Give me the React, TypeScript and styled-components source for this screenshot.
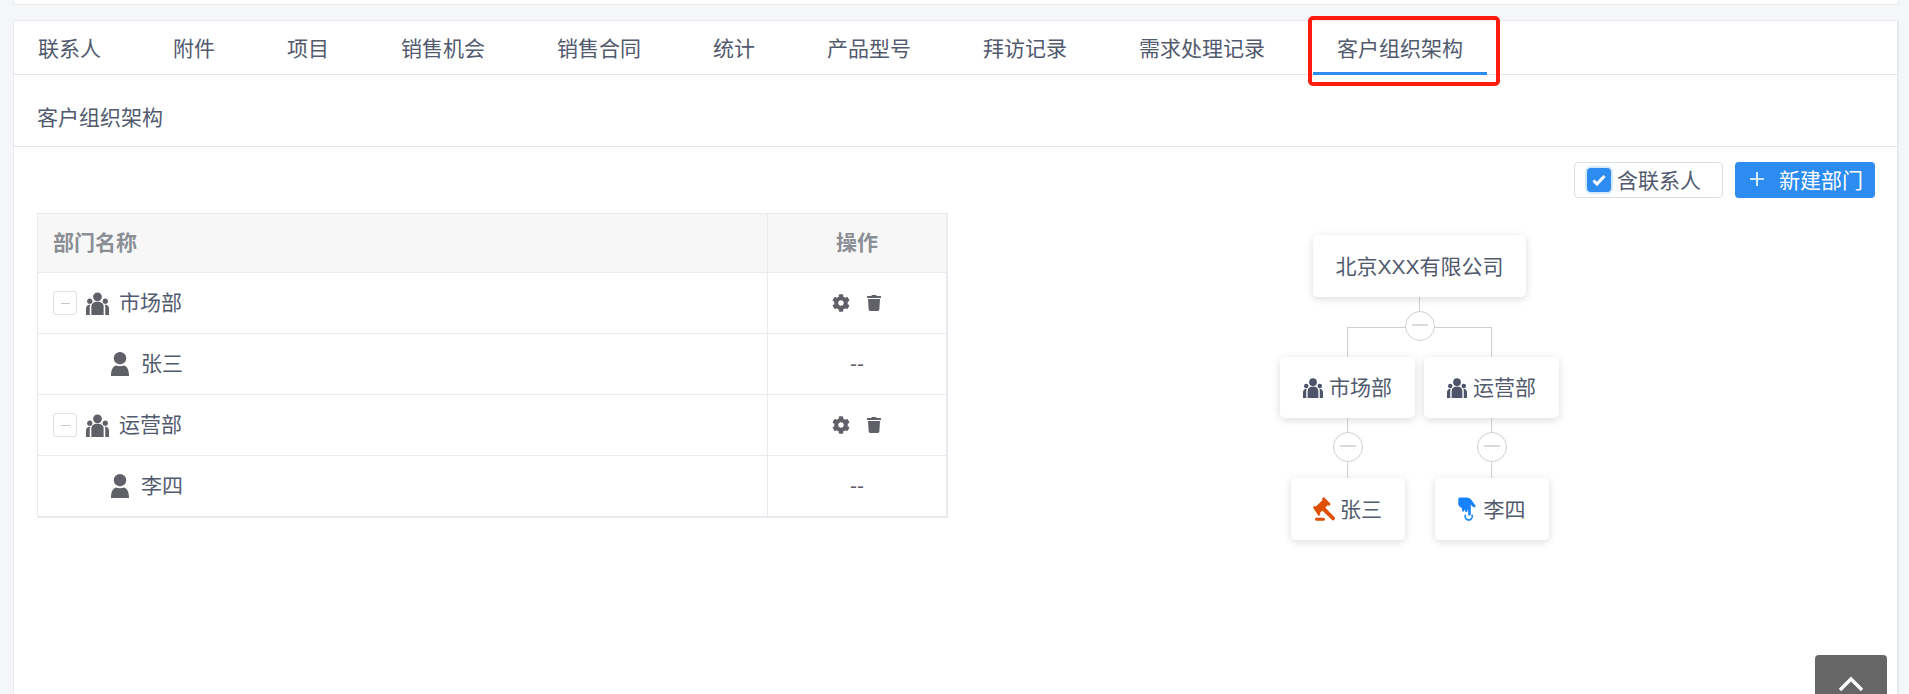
import React from 'react';
import styled, { createGlobalStyle } from 'styled-components';
import { FaCog, FaTrash } from 'react-icons/fa';

const FONT = `"Helvetica Neue", "Liberation Sans", "Noto Sans CJK SC", sans-serif`;
const TEXT = '#515a6e';
const LINE = '#e8eaf0';
const NODE_LINE = '#d0d0d0';
const BLUE = '#2d8cf0';

const Global = createGlobalStyle`
  html, body { margin: 0; padding: 0; height: 694px; overflow: hidden; background: #f5f6f8; }
  body { font-family: ${FONT}; color: ${TEXT}; font-size: 21px; }
  * { box-sizing: border-box; }
`;

const Page = styled.div`
  position: relative;
  height: 694px;
  padding: 0 10px 0 13px;
  overflow: hidden;
`;
const TopStub = styled.div`
  height: 5px;
  background: #fff;
  border: 1px solid ${LINE};
  border-top: 0;
`;
const Card = styled.section`
  margin-top: 15px;
  height: 680px;
  background: #fff;
  border: 1px solid ${LINE};
  border-right-width: 2px;
`;
const TabBar = styled.nav`
  display: flex;
  height: 54px;
  border-bottom: 1px solid #e2e4e9;
`;
const Tab = styled.div<{ $active?: boolean }>`
  position: relative;
  padding: 3px 24px 0;
  margin-right: 24px;
  height: 54px;
  line-height: 49px;
  white-space: nowrap;
  border-bottom: 3px solid ${p => (p.$active ? BLUE : 'transparent')};
`;
const RedBox = styled.div`
  position: absolute;
  left: -5px;
  top: -5px;
  width: 192px;
  height: 70px;
  border: 4px solid #fd1c10;
  border-radius: 5px;
  pointer-events: none;
`;
const SubHeader = styled.div`
  height: 72px;
  padding: 8px 23px 0;
  line-height: 70px;
  border-bottom: 1px solid #e2e4e9;
`;
const Content = styled.div`
  padding: 15px 22px 0 23px;
`;
const Toolbar = styled.div`
  display: flex;
  justify-content: flex-end;
  gap: 12px;
  height: 36px;
`;
const CheckWrap = styled.label`
  display: flex;
  align-items: center;
  width: 149px;
  height: 36px;
  padding-left: 12px;
  gap: 7px;
  border: 1px solid #dcdee2;
  border-radius: 4px;
  background: #fff;
`;
const CheckLabel = styled.span`
  margin-top: -3px;
  margin-left: -1px;
`;
const CheckBox = styled.span`
  display: flex;
  align-items: center;
  justify-content: center;
  width: 24px;
  height: 24px;
  border-radius: 4px;
  background: ${BLUE};
  box-shadow: 0 0 0 2px #d5e8fc;
`;
const PrimaryButton = styled.button`
  display: flex;
  align-items: center;
  width: 140px;
  height: 36px;
  padding: 0 0 3px 15px;
  gap: 15px;
  border: 0;
  border-radius: 4px;
  background: ${BLUE};
  color: #fff;
  font-family: ${FONT};
  font-size: 21px;
`;
const Columns = styled.div`
  display: flex;
  margin-top: 15px;
`;
const Table = styled.div`
  width: 911px;
  height: 305px;
  border: 1px solid ${LINE};
  border-right-width: 2px;
  border-bottom-width: 3px;
  flex: none;
`;
const Row = styled.div<{ $head?: boolean; $last?: boolean }>`
  display: grid;
  grid-template-columns: 730px 1fr;
  height: ${p => (p.$head ? 59 : p.$last ? 60 : 61)}px;
  background: ${p => (p.$head ? '#f7f7f8' : '#fff')};
  border-bottom: ${p => (p.$last ? '0' : `1px solid ${LINE}`)};
`;
const NameCell = styled.div<{ $child?: boolean; $head?: boolean }>`
  display: flex;
  align-items: center;
  border-right: 1px solid ${LINE};
  padding-left: ${p => (p.$child ? 73 : 15)}px;
  padding-bottom: ${p => (p.$head ? 4 : 0)}px;
  ${p => p.$head && 'font-weight: 700; color: #8c8e95;'}
`;
const ActionCell = styled.div<{ $head?: boolean }>`
  display: flex;
  align-items: center;
  justify-content: center;
  gap: 16px;
  color: #5f6068;
  padding-bottom: ${p => (p.$head ? 4 : 0)}px;
  ${p => p.$head && 'font-weight: 700; color: #8c8e95;'}
`;
const Expander = styled.span`
  display: flex;
  align-items: center;
  justify-content: center;
  width: 24px;
  height: 24px;
  margin-right: 9px;
  border: 1px solid #e0e0e0;
  border-radius: 3px;
  &::before {
    content: '';
    width: 9px;
    height: 1px;
    background: #c8c8c8;
  }
`;
const RowLabel = styled.span<{ $gap: number }>`
  margin-left: ${p => p.$gap}px;
  margin-top: -1px;
  line-height: 1;
`;
const Chart = styled.div`
  display: flex;
  flex-direction: column;
  align-items: center;
  width: 279px;
  margin: 22px 0 0 332px;
  flex: none;
`;
const Node = styled.div<{ $w: number; $h?: number; $gap?: number }>`
  display: flex;
  align-items: center;
  justify-content: center;
  gap: ${p => p.$gap ?? 6}px;
  width: ${p => p.$w}px;
  height: ${p => p.$h ?? 62}px;
  background: #fff;
  border-radius: 5px;
  box-shadow: 0 2px 8px rgba(0, 0, 0, 0.14);
  line-height: 1;
  flex: none;
  position: relative;
  z-index: 1;
`;
const Stem = styled.div<{ $h: number }>`
  width: 1px;
  height: ${p => p.$h}px;
  background: ${NODE_LINE};
  flex: none;
`;
const Toggle = styled.div`
  position: relative;
  z-index: 2;
  display: flex;
  align-items: center;
  justify-content: center;
  width: 30px;
  height: 30px;
  border: 1px solid ${NODE_LINE};
  border-radius: 50%;
  background: #fff;
  flex: none;
  &::before {
    content: '';
    width: 16px;
    height: 2px;
    margin-top: -2px;
    background: #dadada;
  }
`;
const Branch = styled.div`
  width: 145px;
  height: 30px;
  margin-top: -14px;
  border: 1px solid ${NODE_LINE};
  border-bottom: 0;
  flex: none;
`;
const ChildRow = styled.div`
  display: flex;
  gap: 9px;
`;
const ChildColumn = styled.div`
  display: flex;
  flex-direction: column;
  align-items: center;
  width: 135px;
`;
const BackTop = styled.div`
  position: absolute;
  left: 1815px;
  top: 655px;
  width: 72px;
  height: 60px;
  display: flex;
  justify-content: center;
  padding-top: 21px;
  background: #666;
  border-radius: 4px 4px 0 0;
`;

const GroupIcon: React.FC<{ color: string; size?: number }> = ({ color, size = 23 }) => (
  <svg width={size} height={size} viewBox="0 0 24 24" fill={color}>
    <circle cx="12" cy="5" r="4.6" />
    <circle cx="3.9" cy="9.6" r="2.7" />
    <circle cx="20.1" cy="9.6" r="2.7" />
    <path d="M5.6 24V15.5C5.6 12.2 8 10.3 12 10.3s6.4 1.9 6.4 5.2V24z" />
    <path d="M0 24v-6.5C0 15 1.2 13.2 4.4 13c-.4.8-.5 1.6-.5 2.5V24zM24 24v-6.5C24 15 22.8 13.2 19.600 13c.4.8.5 1.6.5 2.5V24z" />
  </svg>
);
const PersonIcon: React.FC = () => (
  <svg width="18" height="24" viewBox="0 0 18 24" fill="#5f6068">
    <circle cx="9" cy="6.2" r="6.2" />
    <path d="M0 24c0-6 1.6-9.6 5-10.6 2.4 1 5.6 1 8 0 3.400 1 5 4.600 5 10.600z" />
  </svg>
);
const GavelIcon: React.FC = () => (
  <svg width="24" height="24" viewBox="0 0 24 24" fill="#e04f00">
    <path d="M0 10.600 1.500 9l1.500.6L9.500 3l-.5-1.500L10.800 0l7 7-1.600 1.700-1.500-.5-2.400 2.400 9.200 9.600c.8.900.6 1.800-.1 2.600-.8.800-1.800.8-2.600 0l-9.500-9.200-2.400 2.400.5 1.500-1.700 1.600z" />
    <rect x="2" y="20.800" width="10" height="3" rx="1.500" />
  </svg>
);
const TapIcon: React.FC = () => (
  <svg width="18" height="24" viewBox="0 0 18 24" fill="none">
    <path
      d="M2 .5h6.500c2.500 0 3.800 1 5 2.600l3.600 5c.6.900.4 1.800-.4 2.200-.7.300-1.400 0-2-.7l-1.900-2.100V17c0 1-.6 1.500-1.300 1.500S10.200 18 10.200 17v-4.300h-.7v1.100c0 .8-.5 1.300-1.200 1.300s-1.200-.5-1.200-1.300v-1.100h-.7v.6c0 .8-.5 1.300-1.200 1.300s-1.200-.5-1.200-1.300v-2.100L1.800 9.800C.7 9 .3 8 .3 6.600V2.200C.3 1.200 1 .5 2 .5z"
      fill="#1682ff"
    />
    <path d="M7.700 17.600a3.500 3.500 0 1 0 6 0" stroke="#1682ff" strokeWidth="1.500" />
  </svg>
);

const TABS = ['联系人', '附件', '项目', '销售机会', '销售合同', '统计', '产品型号', '拜访记录', '需求处理记录'];

const ActionIcons: React.FC = () => (
  <>
    <FaCog size={18} />
    <FaTrash size={16} />
  </>
);

export default function App() {
  return (
    <Page>
      <Global />
      <TopStub />
      <Card>
        <TabBar>
          {TABS.map(t => (
            <Tab key={t}>{t}</Tab>
          ))}
          <Tab $active>
            客户组织架构
            <RedBox />
          </Tab>
        </TabBar>
        <SubHeader>客户组织架构</SubHeader>
        <Content>
          <Toolbar>
            <CheckWrap>
              <CheckBox>
                <svg width="14" height="12" viewBox="0 0 14 12">
                  <path d="M1.500 6.500 5 10l7.500-8" fill="none" stroke="#fff" strokeWidth="3" />
                </svg>
              </CheckBox>
              <CheckLabel>含联系人</CheckLabel>
            </CheckWrap>
            <PrimaryButton>
              <svg width="14" height="14" viewBox="0 0 14 14">
                <path d="M7 0v14M0 7h14" stroke="#fff" strokeWidth="1.600" />
              </svg>
              新建部门
            </PrimaryButton>
          </Toolbar>
          <Columns>
            <Table>
              <Row $head>
                <NameCell $head>部门名称</NameCell>
                <ActionCell $head>操作</ActionCell>
              </Row>
              <Row>
                <NameCell>
                  <Expander />
                  <GroupIcon color="#5f6068" />
                  <RowLabel $gap={10}>市场部</RowLabel>
                </NameCell>
                <ActionCell>
                  <ActionIcons />
                </ActionCell>
              </Row>
              <Row>
                <NameCell $child>
                  <PersonIcon />
                  <RowLabel $gap={12}>张三</RowLabel>
                </NameCell>
                <ActionCell>--</ActionCell>
              </Row>
              <Row>
                <NameCell>
                  <Expander />
                  <GroupIcon color="#5f6068" />
                  <RowLabel $gap={10}>运营部</RowLabel>
                </NameCell>
                <ActionCell>
                  <ActionIcons />
                </ActionCell>
              </Row>
              <Row $last>
                <NameCell $child>
                  <PersonIcon />
                  <RowLabel $gap={12}>李四</RowLabel>
                </NameCell>
                <ActionCell>--</ActionCell>
              </Row>
            </Table>
            <Chart>
              <Node $w={213}>北京XXX有限公司</Node>
              <Stem $h={14} />
              <Toggle />
              <Branch />
              <ChildRow>
                <ChildColumn>
                  <Node $w={135} $h={61}>
                    <GroupIcon color="#4d5469" size={20} />
                    市场部
                  </Node>
                  <Stem $h={14} />
                  <Toggle />
                  <Stem $h={16} />
                  <Node $w={114} $gap={3}>
                    <GavelIcon />
                    张三
                  </Node>
                </ChildColumn>
                <ChildColumn>
                  <Node $w={135} $h={61}>
                    <GroupIcon color="#4d5469" size={20} />
                    运营部
                  </Node>
                  <Stem $h={14} />
                  <Toggle />
                  <Stem $h={16} />
                  <Node $w={114} $gap={8}>
                    <TapIcon />
                    李四
                  </Node>
                </ChildColumn>
              </ChildRow>
            </Chart>
          </Columns>
        </Content>
      </Card>
      <BackTop>
        <svg width="26" height="16" viewBox="0 0 26 16">
          <path d="M2 14 13 3l11 11" fill="none" stroke="#fff" strokeWidth="3.400" />
        </svg>
      </BackTop>
    </Page>
  );
}
